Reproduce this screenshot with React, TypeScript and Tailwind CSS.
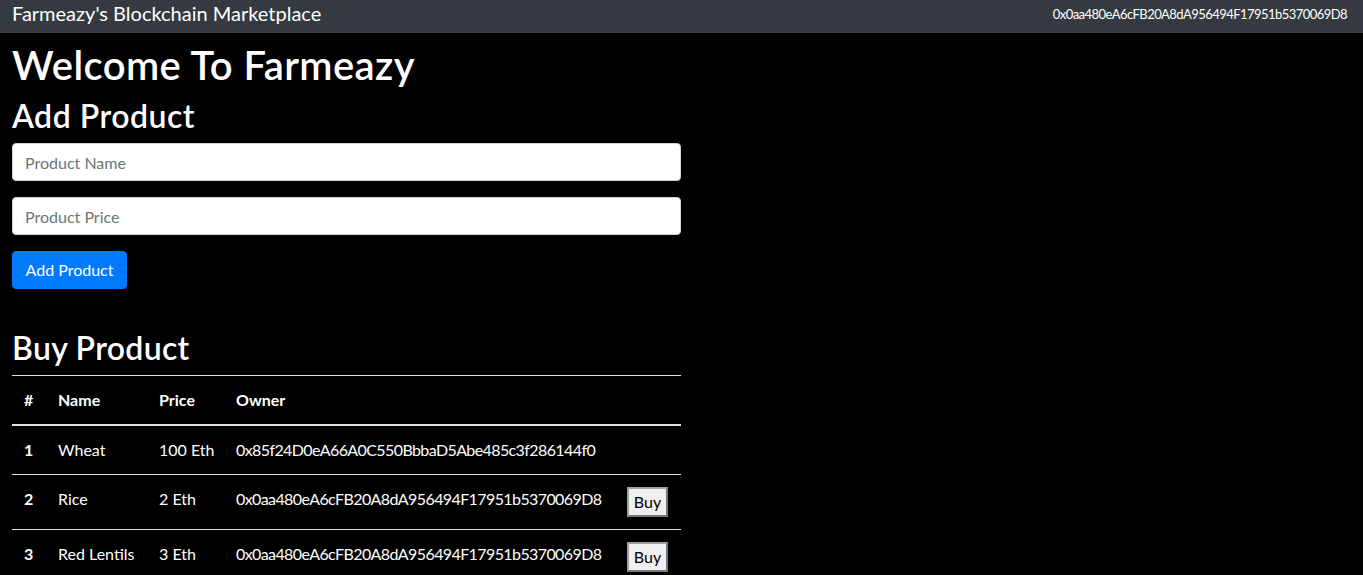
import React from "react";

const rows = [
  { id: 1, name: "Wheat", price: "100 Eth", owner: "0x85f24D0eA66A0C550BbbaD5Abe485c3f286144f0", buy: false },
  { id: 2, name: "Rice", price: "2 Eth", owner: "0x0aa480eA6cFB20A8dA956494F17951b5370069D8", buy: true },
  { id: 3, name: "Red Lentils", price: "3 Eth", owner: "0x0aa480eA6cFB20A8dA956494F17951b5370069D8", buy: true },
];

export default function App() {
  return (
    <div className="min-h-[575px] bg-black text-white font-['Lato',sans-serif]">
      <nav className="flex h-[33px] items-center justify-between bg-[#343a40] pl-[12px] pr-[16px]">
        <span className="mb-[8px] text-[20px] leading-[30px] text-white">Farmeazy's Blockchain Marketplace</span>
        <small className="mb-[4px] text-[13px] tracking-[-0.55px] text-white">0x0aa480eA6cFB20A8dA956494F17951b5370069D8</small>
      </nav>
      <main className="px-[12px] pt-[8px]">
        <div className="w-[669px]">
          <h1 className="mb-[8px] text-[40px] font-semibold leading-[48px] tracking-[0.4px]">Welcome To Farmeazy</h1>
          <h2 className="mb-[8px] text-[32px] font-semibold leading-[38px] tracking-[0.5px]">Add Product</h2>
          <form onSubmit={(e) => e.preventDefault()}>
            <div className="mb-[16px]">
              <input
                type="text"
                placeholder="Product Name"
                className="block h-[38px] w-full rounded-[4px] border border-[#ced4da] bg-white px-[12px] text-[16px] text-[#495057] placeholder:text-[#6c757d] outline-none"
              />
            </div>
            <div className="mb-[16px]">
              <input
                type="text"
                placeholder="Product Price"
                className="block h-[38px] w-full rounded-[4px] border border-[#ced4da] bg-white px-[12px] text-[16px] text-[#495057] placeholder:text-[#6c757d] outline-none"
              />
            </div>
            <button
              type="submit"
              className="h-[38px] w-[115px] rounded-[4px] border border-[#007bff] bg-[#007bff] text-[16px] text-white"
            >
              Add Product
            </button>
          </form>
          <p className="mb-[16px] h-[24px]">&nbsp;</p>
          <h2 className="mb-[8px] text-[32px] font-semibold leading-[38px] tracking-[0.3px]">Buy Product</h2>
          <table className="w-[669px] table-fixed border-collapse text-left text-[16px] leading-[24px]">
            <colgroup>
              <col className="w-[34px]" />
              <col className="w-[101px]" />
              <col className="w-[77px]" />
              <col className="w-[391px]" />
              <col className="w-[66px]" />
            </colgroup>
            <thead>
              <tr className="border-t border-[#dee2e6]">
                <th className="border-b-2 border-[#dee2e6] p-[12px] font-bold">#</th>
                <th className="border-b-2 border-[#dee2e6] p-[12px] font-bold">Name</th>
                <th className="border-b-2 border-[#dee2e6] p-[12px] font-bold">Price</th>
                <th className="border-b-2 border-[#dee2e6] p-[12px] font-bold">Owner</th>
                <th className="border-b-2 border-[#dee2e6] p-[12px]"></th>
              </tr>
            </thead>
            <tbody>
              {rows.map((r) => (
                <tr key={r.id} className="border-t border-[#dee2e6]">
                  <th className="p-[12px] align-top font-bold">{r.id}</th>
                  <td className="whitespace-nowrap p-[12px] align-top">{r.name}</td>
                  <td className="whitespace-nowrap p-[12px] align-top">{r.price}</td>
                  <td className="whitespace-nowrap p-[12px] align-top tracking-[-0.6px]">{r.owner}</td>
                  <td className="p-[12px] align-top">
                    {r.buy ? (
                      <button className="h-[30px] w-[41px] border-2 border-[#767676] border-t-[#a0a0a0] border-l-[#a0a0a0] bg-[#efefef] px-[4px] text-[16px] leading-[24px] text-black">
                        Buy
                      </button>
                    ) : null}
                  </td>
                </tr>
              ))}
            </tbody>
          </table>
        </div>
      </main>
    </div>
  );
}
